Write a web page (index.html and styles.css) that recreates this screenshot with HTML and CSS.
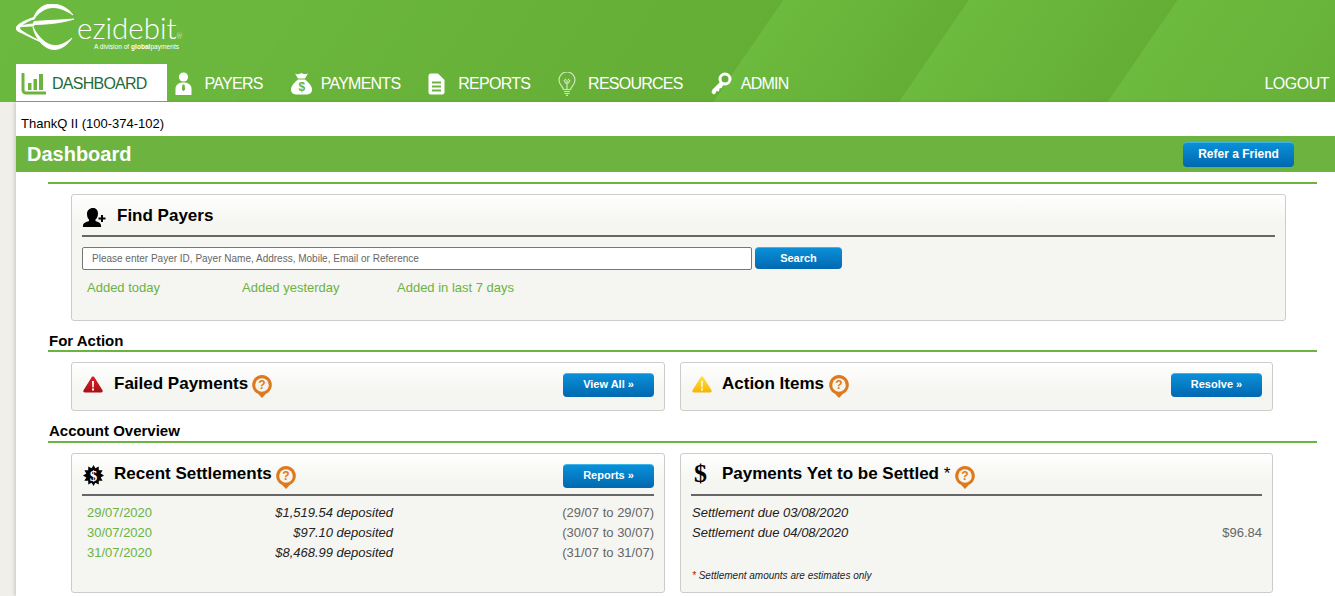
FILE: index.html
```html
<!DOCTYPE html>
<html lang="en">
<head>
  <meta charset="UTF-8" />
  <title>Ezidebit - Dashboard</title>
  <link rel="stylesheet" href="styles.css">
</head>
<body>

<header class="topbar">
  <div class="logo">
    <svg class="logo-mark" width="62" height="48" viewBox="16 4 62 48" fill="#fff" stroke="#fff" stroke-width="0.900" stroke-linejoin="round">
      <path d="M73 15C68 8 60 4 52 4C42 4 35 11 33 20C38 13 45 7.500 53 7.500C60 7.500 67 11 73 15Z"/>
      <path d="M33 24.500C46 24.500 62 23 74 19C62 20 46 20.500 34 21.500Z"/>
      <path d="M33 27C35 38 44 49.500 54 49.500C62 49.500 68 44 72 38C66 43 60 46 54 45.500C46 45 38 37 33 27Z"/>
      <path d="M35 17C26 20 17 24 16 28C15.500 31 20 32 24 34C30 37 38 41 44 43C36 39 28 35 22 31C19 29 19 27 22 25C25 23 30 20 35 18.500Z"/>
      <path d="M18 26.500C24 25 30 24 34 24L34 26C28 26 22 27 18 26.500Z"/>
    </svg>
    <div class="logo-text">
      <div class="logo-name">ezi<span>debit</span><sup>®</sup></div>
      <div class="logo-sub">A division of <b>global</b>payments</div>
    </div>
  </div>
  <nav class="nav">
    <a class="nav-item active" href="#">
      <span class="nav-icon">
        <svg width="25" height="22" viewBox="0 0 25 22"><path d="M2 1v16a3 3 0 0 0 3 3h19" fill="none" stroke="#6cb33f" stroke-width="3" stroke-linecap="round"/><path d="M7 10h3.500v7H7zM12.500 6H16v11h-3.500zM18 1h4v16h-4z" fill="#6cb33f"/></svg>
      </span>
      DASHBOARD
    </a>
    <a class="nav-item" href="#">
      <span class="nav-icon">
        <svg width="17" height="23" viewBox="0 0 17 23"><circle cx="8.500" cy="5" r="4.600" fill="#fff"/><path d="M0.500 23v-6c0-4 3-6.500 8-6.500s8 2.500 8 6.500v6z" fill="#fff"/><path d="M7.500 12.500h2l.6 5-1.600 1.800-1.600-1.800z" fill="#6cb33f"/></svg>
      </span>
      PAYERS
    </a>
    <a class="nav-item" href="#">
      <span class="nav-icon">
        <svg width="21" height="22" viewBox="0 0 21 22"><path d="M4 0.500c2 1 3 1 4 .5s3-1 4-.3 3 .3 5-.2l-3 5H7z" fill="#fff"/><path d="M7 6.500h7c4 3 7 7 7 10 0 4-3 5-6 5H6c-3 0-6-1-6-5 0-3 3-7 7-10z" fill="#fff"/><text class="bag-dollar" x="10.500" y="18" text-anchor="middle">$</text></svg>
      </span>
      PAYMENTS
    </a>
    <a class="nav-item" href="#">
      <span class="nav-icon">
        <svg width="17" height="22" viewBox="0 0 17 22"><path d="M3 0.500h7l6.500 6.500v12a2.500 2.500 0 0 1-2.500 2.500H3A2.500 2.500 0 0 1 .5 19V3A2.500 2.500 0 0 1 3 .5z" fill="#fff"/><path d="M4 8.500h9v2H4zM4 12.500h9v2H4zM4 16.500h9v2H4z" fill="#6cb33f"/></svg>
      </span>
      REPORTS
    </a>
    <a class="nav-item" href="#">
      <span class="nav-icon">
        <svg width="18" height="24" viewBox="0 0 18 24" fill="none" stroke="#cfe6bd" stroke-width="1.200"><path d="M5.500 17.500C4.500 14 1 12.500 1 8a8 8 0 0 1 16 0c0 4.500-3.500 6-4.500 9.500z"/><path d="M6 19.500h6M6.500 21.500h5M8 23.300h2M9 17V8M6 8l1.500 3h3L12 8M7 7l1 1M11 7l-1 1"/></svg>
      </span>
      RESOURCES
    </a>
    <a class="nav-item" href="#">
      <span class="nav-icon">
        <svg width="21" height="23" viewBox="0 0 21 23"><circle cx="14" cy="7" r="5" fill="none" stroke="#fff" stroke-width="3"/><path d="M10 9L1.500 17.500 0.500 20.500l2 2 2-1 1-2.500 2.500.5.5-3 2-.5 3-4.500z" fill="#fff"/></svg>
      </span>
      ADMIN
    </a>
    <a class="nav-logout" href="#">LOGOUT</a>
  </nav>
</header>

<main class="page">
  <div class="account-name">ThankQ II (100-374-102)</div>

  <div class="title-bar">
    <h1>Dashboard</h1>
    <a class="btn btn-refer" href="#">Refer a Friend</a>
  </div>

  <div class="content">
    <div class="rule"></div>

    <section class="panel panel-find">
      <div class="panel-head with-line">
        <span class="head-icon head-icon-find">
          <svg width="23" height="19" viewBox="0 0 23 19"><path d="M10 0c3.500 0 5 2.500 5 5.500 0 2.500-1 5-2.500 6v1.500c3 1 5.500 2 5.500 4.500V19H0v-1.500c0-2.500 3-3.500 6-4.500v-1.500C4.500 10.500 4 8 4 5.500 4 2.500 6.500 0 10 0z" fill="#000"/><path d="M18 7h2v2.500h2.500v2H20V14h-2v-2.500h-2.500v-2H18z" fill="#000"/></svg>
        </span>
        <h3>Find Payers</h3>
      </div>
      <div class="search-row">
        <input class="search-input" type="text" placeholder="Please enter Payer ID, Payer Name, Address, Mobile, Email or Reference">
        <a class="btn btn-search" href="#">Search</a>
      </div>
      <div class="quick-links">
        <a href="#">Added today</a>
        <a href="#">Added yesterday</a>
        <a href="#">Added in last 7 days</a>
      </div>
    </section>

    <h2 class="section-title">For Action</h2>
    <div class="panel-row">
      <section class="panel panel-short">
        <div class="panel-head">
          <span class="head-icon">
            <svg width="20" height="17" viewBox="0 0 20 17"><defs><linearGradient id="redTri" x1="0" y1="0" x2="0" y2="1"><stop offset="0" stop-color="#d9202a"/><stop offset="1" stop-color="#a80f14"/></linearGradient></defs><path d="M10 .5c.8 0 1.300.5 1.700 1.200l7.800 12.500c.6 1.200 0 2.300-1.300 2.300H1.800C.5 16.500-.1 15.400.5 14.200L8.300 1.700C8.700 1 9.200.5 10 .5z" fill="url(#redTri)"/><path d="M9 5h2l-.3 6.500H9.300zM9 12.500h2v2H9z" fill="#fff"/></svg>
          </span>
          <h3>Failed Payments</h3>
          <svg class="help" width="20" height="23" viewBox="0 0 20 23"><path d="M10 23l-4-4.200A9.800 9.800 0 1 1 14 18.800z" fill="#dd7a1f"/><circle cx="10" cy="10" r="6.800" fill="#f7f4ec"/><text class="help-mark" x="10" y="14" text-anchor="middle">?</text></svg>
          <a class="btn btn-panel" href="#">View All »</a>
        </div>
      </section>
      <section class="panel panel-short">
        <div class="panel-head">
          <span class="head-icon">
            <svg width="20" height="17" viewBox="0 0 20 17"><defs><linearGradient id="yellowTri" x1="0" y1="0" x2="0" y2="1"><stop offset="0" stop-color="#ffe04a"/><stop offset="1" stop-color="#f6b400"/></linearGradient></defs><path d="M10 .5c.8 0 1.300.5 1.700 1.200l7.800 12.500c.6 1.200 0 2.300-1.300 2.300H1.800C.5 16.500-.1 15.400.5 14.200L8.300 1.700C8.700 1 9.200.5 10 .5z" fill="url(#yellowTri)"/><path d="M9 5h2l-.3 6.500H9.300zM9 12.500h2v2H9z" fill="#fff8cf"/></svg>
          </span>
          <h3>Action Items</h3>
          <svg class="help" width="20" height="23" viewBox="0 0 20 23"><path d="M10 23l-4-4.200A9.800 9.800 0 1 1 14 18.800z" fill="#dd7a1f"/><circle cx="10" cy="10" r="6.800" fill="#f7f4ec"/><text class="help-mark" x="10" y="14" text-anchor="middle">?</text></svg>
          <a class="btn btn-panel" href="#">Resolve »</a>
        </div>
      </section>
    </div>

    <h2 class="section-title">Account Overview</h2>
    <div class="panel-row">
      <section class="panel panel-tall">
        <div class="panel-head with-line">
          <span class="head-icon head-icon-badge">
            <svg width="21" height="21" viewBox="0 0 21 21"><path d="M21 10.500L17.700 12.400 19.600 15.750 15.800 15.800 15.750 19.600 12.400 17.700 10.500 21 8.600 17.700 5.250 19.600 5.200 15.800 1.400 15.750 3.300 12.400 0 10.500 3.300 8.600 1.400 5.250 5.200 5.200 5.250 1.400 8.600 3.300 10.500 0 12.400 3.300 15.750 1.400 15.800 5.200 19.600 5.250 17.700 8.600z" fill="#000"/><text class="badge-dollar" x="10.500" y="15.500" text-anchor="middle">$</text></svg>
          </span>
          <h3>Recent Settlements</h3>
          <svg class="help" width="20" height="23" viewBox="0 0 20 23"><path d="M10 23l-4-4.200A9.800 9.800 0 1 1 14 18.800z" fill="#dd7a1f"/><circle cx="10" cy="10" r="6.800" fill="#f7f4ec"/><text class="help-mark" x="10" y="14" text-anchor="middle">?</text></svg>
          <a class="btn btn-panel" href="#">Reports »</a>
        </div>
        <div class="settle-row"><a href="#">29/07/2020</a><em>$1,519.54 deposited</em><span>(29/07 to 29/07)</span></div>
        <div class="settle-row"><a href="#">30/07/2020</a><em>$97.10 deposited</em><span>(30/07 to 30/07)</span></div>
        <div class="settle-row"><a href="#">31/07/2020</a><em>$8,468.99 deposited</em><span>(31/07 to 31/07)</span></div>
      </section>
      <section class="panel panel-tall">
        <div class="panel-head with-line">
          <span class="head-icon dollar-icon">$</span>
          <h3>Payments Yet to be Settled <span class="star">*</span></h3>
          <svg class="help" width="20" height="23" viewBox="0 0 20 23"><path d="M10 23l-4-4.200A9.800 9.800 0 1 1 14 18.800z" fill="#dd7a1f"/><circle cx="10" cy="10" r="6.800" fill="#f7f4ec"/><text class="help-mark" x="10" y="14" text-anchor="middle">?</text></svg>
        </div>
        <div class="due-row"><em>Settlement due 03/08/2020</em></div>
        <div class="due-row"><em>Settlement due 04/08/2020</em><span>$96.84</span></div>
        <p class="footnote"><b>*</b> Settlement amounts are estimates only</p>
      </section>
    </div>
  </div>
</main>

</body>
</html>
```

FILE: styles.css
```css
* {
  box-sizing: border-box;
}
body {
  margin: 0;
  font-family: "Liberation Sans", Arial, sans-serif;
  font-size: 13px;
  color: #000;
  background-color: #f0efe9;
  overflow: hidden;
}
a {
  text-decoration: none;
}

/* Top bar */
.topbar {
  height: 102px;
  background-color: #68b139;
  background-image: linear-gradient(124.5deg,
    #6cb93f 0, #6bb73d 251px,
    #6ab53b 252px, #65ae36 645px,
    #6cba3e 646px, #65ae36 798px,
    #6cba3e 799px, #65ae36 970px,
    #6cba3e 971px, #67b038 1159px);
}
.logo {
  display: flex;
  height: 64px;
  padding: 4px 0 0 16px;
}
.logo-mark {
  flex: none;
}
.logo-text {
  margin-left: -1px;
  color: #fff;
}
.logo-name {
  font-family: Lato, sans-serif;
  font-weight: 300;
  font-size: 29.500px;
  line-height: 30px;
  margin-top: 9px;
  white-space: nowrap;
}
.logo-name span {
  font-weight: 300;
}
.logo-name sup {
  font-size: 7px;
  line-height: 0;
  vertical-align: baseline;
}
.logo-sub {
  font-size: 6.600px;
  line-height: 8px;
  margin: 0 0 0 17px;
  white-space: nowrap;
}
.nav {
  display: flex;
  height: 37px;
  padding-left: 16px;
}
.nav-item {
  display: flex;
  align-items: center;
  padding: 2px 20px 0 8px;
  color: #fff;
  font-size: 16px;
  letter-spacing: -0.75px;
}
.nav-item.active {
  background-color: #fff;
  color: #1f6b3a;
  padding-left: 5px;
}
.nav-item.active .nav-icon {
  width: 31px;
}
.nav-icon {
  display: flex;
  width: 30px;
  flex: none;
}
.nav-logout {
  margin-left: auto;
  margin-right: 6px;
  padding-top: 1px;
  color: #fff;
  font-size: 16px;
  letter-spacing: -0.5px;
  line-height: 37px;
}
.bag-dollar {
  font-size: 12px;
  font-weight: bold;
  fill: #6cb33f;
}

/* Page */
.page {
  margin-left: 16px;
  min-height: 494px;
  background-color: #fff;
  box-shadow: -2px 0 3px rgba(0,0,0,0.12);
}
.account-name {
  height: 34px;
  padding: 14px 0 0 5px;
  font-size: 13px;
  line-height: 15px;
}
.title-bar {
  display: flex;
  align-items: center;
  justify-content: space-between;
  height: 36px;
  padding: 0 41px 0 11px;
  background-color: #6cb33f;
}
.title-bar h1 {
  margin: 0;
  font-size: 20px;
  color: #fff;
}
.content {
  padding: 10px 18px 0 32px;
}
.rule {
  height: 2px;
  background-color: #6cb33f;
}

/* Buttons */
.btn {
  display: block;
  text-align: center;
  color: #fff;
  font-weight: bold;
  font-size: 11px;
  border-radius: 4px;
  background: linear-gradient(#0a90d8, #0068b0);
  border-top: 1px solid #3fb4e8;
}
.btn-refer {
  width: 111px;
  height: 25px;
  line-height: 23px;
  font-size: 12px;
}
.btn-search {
  width: 87px;
  height: 22px;
  line-height: 20px;
}
.btn-panel {
  width: 91px;
  height: 24px;
  line-height: 21px;
  margin-left: auto;
  margin-top: 4px;
}

/* Panels */
.panel {
  border: 1px solid #ccc;
  border-radius: 3px;
  background: linear-gradient(#fff, #f5f5f1 28px);
  padding: 0 10px;
}
.panel-find {
  width: 1215px;
  height: 127px;
  margin: 10px 0 0 23px;
}
.panel-find h3 {
  margin-top: 2px;
}
.panel-head {
  display: flex;
  align-items: center;
  height: 42px;
}
.panel-head.with-line {
  border-bottom: 2px solid #666;
}
.panel-head h3 {
  font-size: 17px;
  line-height: 20px;
  white-space: nowrap;
  margin-bottom: 0;
}
.panel-row h3 {
  margin-top: 0;
}
.panel-row {
  display: grid;
  grid-template-columns: 594px 593px;
  gap: 15px;
  margin-left: 23px;
  margin-top: 10px;
}
.panel-short {
  height: 49px;
}
.panel-short .panel-head {
  height: 47px;
}
.panel-short h3 {
  padding-bottom: 6px;
}
.panel-short .head-icon {
  margin-bottom: 4px;
}
.panel-short .help {
  margin-top: 0;
}
.panel-short .btn-panel {
  margin-top: 0;
  margin-bottom: 3px;
}
.panel-tall {
  height: 140px;
}
.head-icon {
  display: flex;
  width: 32px;
  flex: none;
  padding-left: 1px;
}
.panel-row .panel:last-child .head-icon {
  width: 31px;
}
.head-icon-find {
  width: 35px;
  margin-top: 5px;
}
.head-icon-badge {
  margin-top: 3px;
}
.panel-row .panel:last-child .dollar-icon {
  padding-left: 3px;
}
.dollar-icon {
  font-family: "Liberation Serif", serif;
  font-weight: bold;
  font-size: 26px;
  line-height: 26px;
}
.star {
  font-weight: normal;
}
.help {
  flex: none;
  margin-left: 4px;
  margin-top: 7px;
}
.panel-row .panel:last-child .help {
  margin-left: 5px;
}
.help-mark {
  font-size: 12px;
  font-weight: bold;
  fill: #dd7a1f;
}
.badge-dollar {
  font-family: "Liberation Serif", serif;
  font-size: 15px;
  font-weight: bold;
  fill: #fff;
}
.section-title {
  margin: 11px 0 0;
  padding: 0 0 1px 1px;
  font-size: 15px;
  line-height: 17px;
  border-bottom: 2px solid #6cb33f;
}
.section-title + .panel-row + .section-title {
  line-height: 18px;
}

/* Find payers */
.search-row {
  display: flex;
  align-items: flex-start;
  gap: 3px;
  margin-top: 10px;
}
.search-input {
  width: 670px;
  height: 23px;
  padding: 0 9px;
  border: 1px solid #777;
  border-radius: 2px;
  background-color: #fff;
  font-family: inherit;
  font-size: 10px;
}
.search-input::placeholder {
  color: #666;
  opacity: 1;
}
.quick-links {
  display: flex;
  margin: 10px 0 0 5px;
}
.quick-links a {
  width: 155px;
  color: #6cb33f;
  font-size: 13px;
  line-height: 16px;
}

/* Settlements */
.settle-row {
  display: grid;
  grid-template-columns: 65px 241px 1fr;
  margin-left: 5px;
  height: 20px;
  line-height: 20px;
  font-size: 13px;
}
.panel-head + .settle-row {
  margin-top: 7px;
}
.settle-row a {
  color: #6cb33f;
}
.settle-row em {
  text-align: right;
  color: #222;
}
.settle-row span {
  text-align: right;
  color: #666;
}
.due-row {
  display: flex;
  justify-content: space-between;
  height: 20px;
  line-height: 20px;
  font-size: 13px;
  padding-left: 1px;
}
.panel-head + .due-row {
  margin-top: 7px;
}
.due-row em {
  color: #222;
}
.due-row span {
  color: #666;
}
.footnote {
  margin: 27px 0 0 1px;
  font-size: 10px;
  line-height: 12px;
  font-style: italic;
  color: #222;
}
.footnote b {
  color: #c00;
  font-weight: normal;
}
```
